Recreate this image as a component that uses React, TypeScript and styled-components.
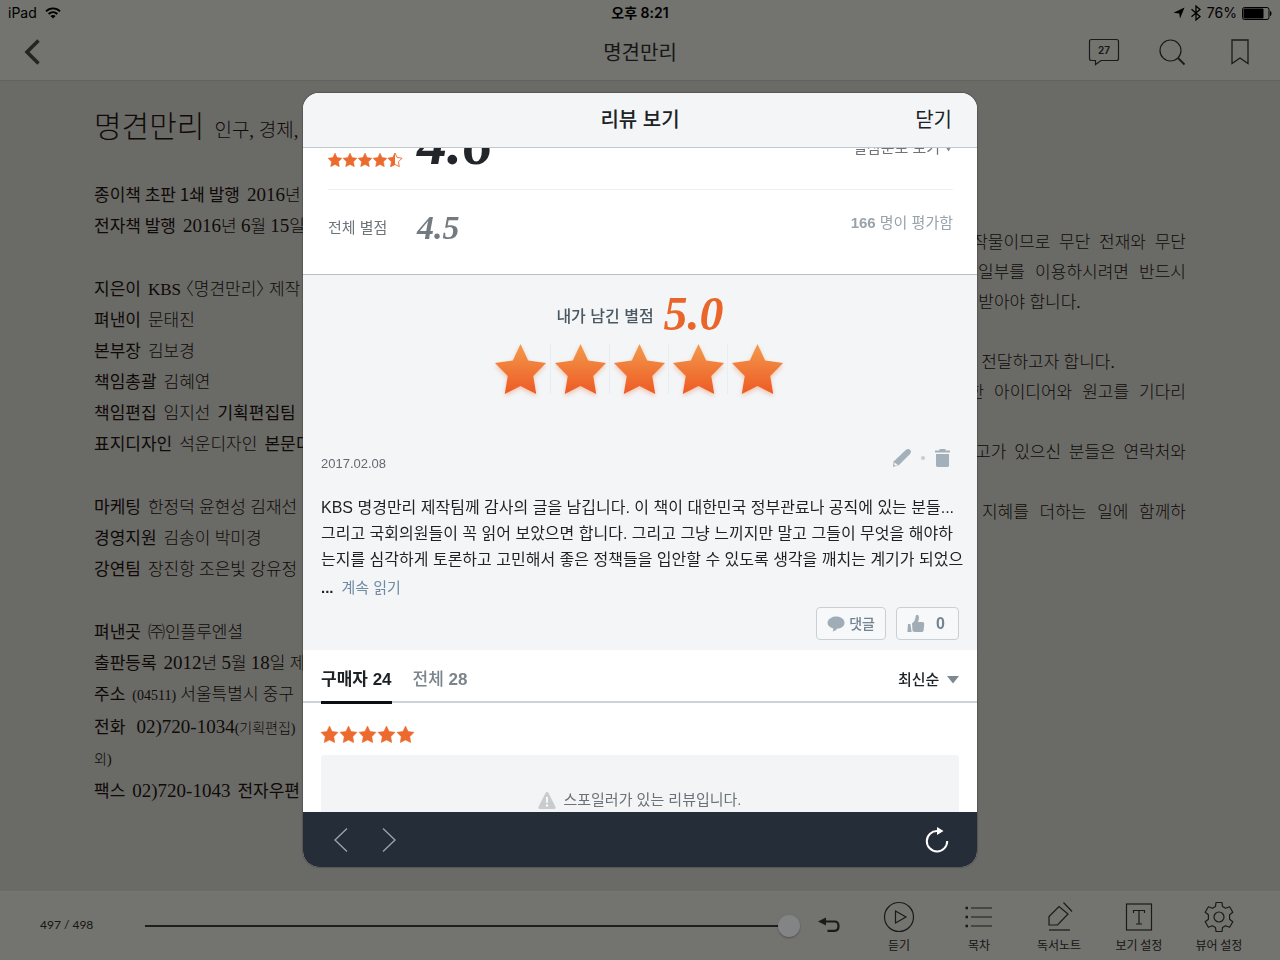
import React from "react";
import styled, { createGlobalStyle, css } from "styled-components";

const GlobalStyle = createGlobalStyle`
  *, *::before, *::after { box-sizing: border-box; }
  body { margin: 0; background: #cccbc6; }
  button, input, select { font: inherit; color: inherit; }
  h1, h2, p, dl, dt, dd { margin: 0; font-size: inherit; font-weight: inherit; }
`;

const sans = `"Liberation Sans", "Noto Sans CJK KR", sans-serif`;
const korean = `"Noto Sans CJK KR", sans-serif`;
const book = `"Liberation Serif", "Noto Sans CJK KR", serif`;

/* ---------- Reader ---------- */

const Reader = styled.div`
  display: flex;
  flex-direction: column;
  min-height: 100vh;
  color: #2c2c2c;
  font-family: ${korean};
`;

const TopBar = styled.header`
  background: #dddcd5;
  border-bottom: 1px solid #bdbcb6;
`;

const StatusBar = styled.div`
  display: grid;
  grid-template-columns: 1fr auto 1fr;
  align-items: center;
  height: 26px;
  padding: 0 8px;
  color: #000;
  font: 14px/20px Inter, "Noto Sans CJK KR", sans-serif;
`;

const StatusGroup = styled.div<{ $end?: boolean }>`
  display: flex;
  align-items: center;
  justify-content: ${(p) => (p.$end ? "flex-end" : "flex-start")};
  gap: ${(p) => (p.$end ? "5px" : "8px")};
`;

const Clock = styled.time`
  font-weight: 600;
`;

const NavBar = styled.div`
  display: grid;
  grid-template-columns: 1fr auto 1fr;
  align-items: center;
  height: 54px;
  padding: 0 24px 2px;
`;

const NavTitle = styled.h1`
  font-size: 20px;
  line-height: 28px;
`;

const NavActions = styled.div`
  display: flex;
  justify-content: flex-end;
  align-items: center;
  gap: 36px;
`;

const IconButton = styled.button`
  display: flex;
  justify-content: center;
  align-items: center;
  min-width: 32px;
  height: 32px;
  padding: 0;
  border: 0;
  background: none;
`;

const BackButton = styled(IconButton)`
  justify-content: flex-start;
  justify-self: start;
`;

const Pages = styled.main`
  display: grid;
  grid-template-columns: 1fr 1fr;
  gap: 108px;
  flex: 1;
  padding: 26px 94px 24px;
  color: #22150f;
  font-family: ${book};
  font-size: 17px;
  font-weight: 300;
`;

const LeftPage = styled.section`
  min-width: 0;
`;

const RightPage = styled.section`
  min-width: 0;
  padding-top: 121px;
  line-height: 30px;
`;

const BookTitle = styled.h2`
  display: flex;
  align-items: baseline;
  gap: 10px;
  height: 40px;
  margin-bottom: 31px;
  font-size: 30px;
  line-height: 40px;
`;

const BookSubtitle = styled.small`
  font-size: 19px;
`;

const CreditGroup = styled.dl`
  margin-bottom: 32px;
`;

const Credit = styled.div<{ $tall?: boolean }>`
  display: flex;
  align-items: baseline;
  gap: 7px;
  height: ${(p) => (p.$tall ? "33px" : "31px")};
  line-height: 31px;
  white-space: nowrap;
`;

const CreditLabel = styled.dt`
  color: #20130d;
  font-family: ${korean};
  font-weight: 400;
`;

const Note = styled.small`
  font-size: 14px;
`;

const Numeral = styled.span`
  font-size: 19px;
  line-height: 20px;
`;

const TitleInBrackets = styled.cite`
  font-style: normal;
  font-feature-settings: "halt";
`;

const Paragraph = styled.p`
  margin-bottom: 30px;
`;

const Line = styled.span<{ $full?: boolean }>`
  display: block;
  white-space: nowrap;
  ${(p) => p.$full && css`text-align-last: justify;`}
`;

const BottomBar = styled.footer`
  display: flex;
  align-items: center;
  height: 69px;
  padding: 0 21px 0 40px;
  background: #dddcd5;
  border-top: 1px solid #e4e3dd;
`;

const PageCount = styled.label`
  flex: 0 0 105px;
  padding-bottom: 2px;
  font: 12px/20px Lato, sans-serif;
`;

const Progress = styled.input`
  flex: 1;
  min-width: 0;
  height: 24px;
  margin: 0;
  appearance: none;
  background: linear-gradient(#3a3a3a, #3a3a3a) center / 100% 2px no-repeat;

  &::-webkit-slider-thumb {
    width: 22px;
    height: 22px;
    appearance: none;
    border-radius: 50%;
    background: #fcfdff;
    box-shadow: 0 1px 2px rgba(0, 0, 0, 0.3);
  }
`;

const UndoButton = styled(IconButton)`
  margin: 0 14px 0 13px;
  padding-bottom: 2px;
`;

const Tool = styled.button`
  display: flex;
  flex-direction: column;
  align-items: center;
  width: 80px;
  padding: 3px 0 0;
  border: 0;
  background: none;
  font-size: 12px;
  line-height: 18px;
  gap: 3px;
`;

/* ---------- Review dialog ---------- */

const Backdrop = styled.div`
  position: fixed;
  inset: 0;
  display: flex;
  align-items: center;
  justify-content: center;
  background: rgba(0, 0, 0, 0.48);
`;

const Dialog = styled.section`
  display: flex;
  flex-direction: column;
  width: 674px;
  max-width: calc(100vw - 32px);
  height: calc(100vh - 186px);
  overflow: hidden;
  border-radius: 16px;
  background: #fff;
  box-shadow: 0 0 1px 1px rgba(0, 0, 0, 0.2);
  color: #1d2226;
  font-family: ${sans};
  font-size: 15px;
  line-height: 20px;
`;

const DialogHeader = styled.header`
  display: grid;
  grid-template-columns: 1fr auto 1fr;
  align-items: center;
  flex: none;
  height: 55px;
  padding: 0 25px;
  border-bottom: 1px solid #c2c7ca;
  background: #f3f5f7;
  font-size: 20px;
  line-height: 28px;
`;

const DialogTitle = styled.h2`
  grid-column: 2;
  font-weight: 500;
`;

const CloseButton = styled.button`
  justify-self: end;
  padding: 0;
  border: 0;
  background: none;
`;

const DialogBody = styled.div`
  flex: 1;
  min-height: 0;
  overflow: hidden;
`;

const Summary = styled.div`
  padding: 0 24px 0 25px;
  border-bottom: 1px solid #b9c1c5;
`;

const ScoreRow = styled.div<{ $clipped?: boolean }>`
  display: flex;
  align-items: ${(p) => (p.$clipped ? "flex-end" : "center")};
  height: ${(p) => (p.$clipped ? "42px" : "84px")};
  overflow: hidden;
  ${(p) => p.$clipped && css`border-bottom: 1px solid #eef0f1;`}
`;

const ScoreLabel = styled.div<{ $clipped?: boolean }>`
  width: 89px;
  padding-bottom: ${(p) => (p.$clipped ? "22px" : "8px")};
  color: #6d757b;
`;

const Score = styled.strong<{ $size: number; $color: string }>`
  color: ${(p) => p.$color};
  font: italic 700 ${(p) => p.$size}px/1 "Liberation Serif", serif;
`;

const BigScore = styled(Score)`
  margin-bottom: 15px;
`;

const SmallScore = styled(Score)`
  margin-bottom: 8px;
`;

const RaterCount = styled.p`
  margin-left: auto;
  padding-bottom: 18px;
  color: #98a3ac;
`;

const SpreadButton = styled.button`
  display: flex;
  align-items: center;
  gap: 4px;
  margin: 0 0 31px auto;
  padding: 0;
  border: 0;
  background: none;
  color: #6d757b;
  line-height: 20px;
`;

const Stars = styled.div<{ $gap: number }>`
  display: flex;
  gap: ${(p) => p.$gap}px;
`;

const MyReview = styled.article`
  padding: 22px 18px 10px;
  background: #f3f5f7;
`;

const MyRating = styled.div`
  display: flex;
  align-items: center;
  justify-content: center;
  gap: 10px;
  height: 40px;
  color: #4b5862;
  font-size: 16px;
  font-weight: 500;
`;

const MyScore = styled(Score)`
  margin-bottom: 6px;
`;

const BigStars = styled.div`
  display: flex;
  justify-content: center;
  margin-top: 7px;
  padding-right: 3px;
`;

const BigStar = styled.span`
  display: flex;
  justify-content: center;
  width: 59px;
  & + & { border-left: 1px solid #eaedef; }
`;

const MetaRow = styled.div`
  display: flex;
  justify-content: space-between;
  height: 26px;
  margin-top: 54px;
`;

const ReviewDate = styled.time`
  align-self: flex-end;
  color: #626a70;
  font-size: 13px;
`;

const MetaActions = styled.div`
  display: flex;
  align-items: center;
  gap: 9px;
  height: 20px;
  padding-right: 8px;
`;

const MetaButton = styled.button`
  display: flex;
  padding: 0;
  border: 0;
  background: none;
`;

const Dot = styled.span`
  width: 4px;
  height: 4px;
  border-radius: 50%;
  background: #c6cdd2;
`;

const ReviewText = styled.p`
  margin-top: 21px;
  font-size: 16px;
  line-height: 26px;
`;

const More = styled.p`
  display: flex;
  gap: 8px;
  font-size: 15px;
  line-height: 30px;
`;

const MoreLink = styled.a`
  color: #6f8ba3;
  text-decoration: none;
`;

const ReviewActions = styled.div`
  display: flex;
  justify-content: flex-end;
  gap: 10px;
  margin-top: 4px;
`;

const PillButton = styled.button<{ $gap: number }>`
  display: flex;
  align-items: center;
  gap: ${(p) => p.$gap}px;
  height: 33px;
  padding: 0 10px;
  border: 1px solid #c9cfd4;
  border-radius: 4px;
  background: #f6f8f9;
  color: #748391;
  font-size: 14px;
  font-weight: 500;
`;

const Count = styled.span`
  min-width: 15px;
  font-size: 16px;
  font-weight: 700;
`;

const ListHeader = styled.div`
  display: flex;
  align-items: center;
  justify-content: space-between;
  height: 53px;
  padding: 0 18px;
  border-bottom: 2px solid #cdd2d6;
`;

const Tabs = styled.div`
  display: flex;
  align-self: stretch;
  gap: 21px;
`;

const Tab = styled.button<{ $active?: boolean }>`
  height: 54px;
  padding: 8px 0 0;
  border: 0;
  border-bottom: 3px solid ${(p) => (p.$active ? "#0c0f12" : "transparent")};
  background: none;
  color: ${(p) => (p.$active ? "#1d2226" : "#7a848d")};
  font-size: 17px;
  font-weight: ${(p) => (p.$active ? 700 : 500)};
`;

const SortField = styled.label`
  display: flex;
  align-items: center;
  gap: 7px;
  padding-top: 8px;
`;

const SortSelect = styled.select`
  padding: 0;
  border: 0;
  background: none;
  appearance: none;
  font-weight: 500;
  line-height: 20px;
`;

const ReviewItem = styled.article`
  padding: 23px 18px;
`;

const SpoilerBox = styled.div`
  display: flex;
  justify-content: center;
  gap: 7px;
  min-height: 140px;
  margin-top: 12px;
  padding-top: 35px;
  border-radius: 3px;
  background: #f3f4f5;
  color: #6b7277;
`;

const DialogFooter = styled.footer`
  display: flex;
  align-items: center;
  flex: none;
  gap: 16px;
  height: 55px;
  padding: 0 24px 0 22px;
  background: #252d39;
`;

const ReloadButton = styled(IconButton)`
  margin-left: auto;
`;

/* ---------- Icons ---------- */

const STAR =
  "M12 0 L15.6 7.7 L24 8.9 L18 15 L19.4 23.4 L12 19.6 L4.6 23.4 L6 15 L0 8.9 L8.4 7.7 Z";

const Star = ({ size, half }: { size: number; half?: boolean }) => (
  <svg width={size} height={size} viewBox="0 0 24 24" overflow="visible" aria-hidden="true">
    {half ? (
      <>
        <path d={STAR} fill="none" stroke="#ec6a2e" strokeWidth="1.6" />
        <path d="M12 0 V19.6 L4.6 23.4 L6 15 L0 8.9 L8.4 7.7 Z" fill="#ec6a2e" />
      </>
    ) : (
      <path d={STAR} fill="#ec6a2e" stroke="#ec6a2e" strokeWidth="0.8" />
    )}
  </svg>
);

const starShadow = { filter: "drop-shadow(0 1px 1px rgba(237,100,40,.35))" };

const GradientStar = ({ id }: { id: string }) => (
  <svg width="51" height="50" viewBox="0 0 24 23.4" preserveAspectRatio="none" overflow="visible" aria-hidden="true">
    <defs>
      <linearGradient id={id} x1="0" y1="0" x2="0" y2="1">
        <stop offset="0" stopColor="#f39a4b" />
        <stop offset="1" stopColor="#ed5a24" />
      </linearGradient>
    </defs>
    <path d={STAR} fill={`url(#${id})`} style={starShadow} />
  </svg>
);

const WifiIcon = () => (
  <svg width="16" height="12" viewBox="0 0 16 12" fill="none" stroke="#000" strokeWidth="1.9">
    <path d="M1 4.4 C5 0.4 11 0.4 15 4.4" />
    <path d="M3.6 7 C6.2 4.5 9.8 4.5 12.4 7" />
    <path d="M8 11.6 L5.4 8.9 C6.9 7.6 9.1 7.6 10.6 8.9 Z" fill="#000" stroke="none" />
  </svg>
);

const LocationIcon = () => (
  <svg width="12" height="12" viewBox="0 0 12 12">
    <path d="M11.500 0.500 L7 11.500 L6.300 6.600 L0.500 5.800 Z" />
  </svg>
);

const BluetoothIcon = () => (
  <svg width="12" height="16" viewBox="0 0 12 16" fill="none" stroke="#000" strokeWidth="1.3">
    <path d="M1.5 4.2 L10 11.6 L6 15 V1 L10 4.4 L1.5 11.8" />
  </svg>
);

const BatteryIcon = () => (
  <svg width="30" height="13" viewBox="0 0 30 13">
    <rect x="0.5" y="0.5" width="26.500" height="12" rx="2" fill="none" stroke="#000" />
    <rect x="1.5" y="1.5" width="20" height="10" rx="1" />
    <path d="M28 4 C30 4.6 30 8.4 28 9 Z" />
  </svg>
);

const BackIcon = () => (
  <svg width="18" height="26" viewBox="0 0 18 26" fill="none" stroke="#464646" strokeWidth="3.600">
    <path d="M14.500 1.5 L3 13 L14.500 24.5" />
  </svg>
);

const CommentsIcon = () => (
  <svg width="32" height="28" viewBox="0 0 32 28">
    <path
      d="M3.5 1.5 H28.5 Q30.5 1.5 30.5 3.5 V20.5 Q30.5 22.5 28.5 22.5 H13 L7.5 26.5 V22.5 H3.5 Q1.5 22.5 1.5 20.5 V3.5 Q1.5 1.5 3.5 1.5 Z"
      fill="none"
      stroke="#333"
      strokeWidth="1.2"
    />
    <text x="16" y="15.500" textAnchor="middle" fill="#2c2c2c" fontFamily="Inter, sans-serif" fontSize="10" fontWeight="600">
      27
    </text>
  </svg>
);

const SearchIcon = () => (
  <svg width="28" height="28" viewBox="0 0 28 28" fill="none" stroke="#333" strokeWidth="1.2">
    <circle cx="12.5" cy="12.5" r="10.5" />
    <path d="M20 20 L26.500 26.500" strokeWidth="1.8" />
  </svg>
);

const BookmarkIcon = () => (
  <svg width="18" height="26" viewBox="0 0 18 26" fill="none" stroke="#333" strokeWidth="1.3">
    <path d="M1 1 H17 V24.500 L9 19 L1 24.500 Z" />
  </svg>
);

const UndoIcon = () => (
  <svg width="24" height="18" viewBox="0 0 24 18">
    <path d="M1 5.500 L9 1.500 V9.500 Z" fill="#333" />
    <path d="M8 5.500 H17.500 Q21.500 5.500 21.500 10 Q21.500 14.800 17.500 14.800 H10.500" fill="none" stroke="#333" strokeWidth="2.200" />
  </svg>
);

const PencilIcon = () => (
  <svg width="20" height="20" viewBox="0 0 20 20" fill="#a3b0ba">
    <path d="M13.500 2.300 Q16 0 18 1.800 Q20 3.800 17.800 6.200 L7 17 L1 19 L1.600 13.600 Z" />
    <path d="M2.600 14.400 L6 17 L3.600 17.800 L2 16.600 Z" fill="#f3f5f7" />
  </svg>
);

const TrashIcon = () => (
  <svg width="17" height="20" viewBox="0 0 17 20" fill="#a3b0ba">
    <path d="M5.500 2.500 V1 H11.500 V2.500 H16 V4.600 H1 V2.500 Z" />
    <path d="M2 6 H15 V17.600 Q15 19 13.600 19 H3.400 Q2 19 2 17.600 Z" />
  </svg>
);

const BubbleIcon = () => (
  <svg width="18" height="16" viewBox="0 0 18 16">
    <path d="M9 0.500 C13.800 0.500 17.500 3.200 17.500 6.700 C17.500 10.200 13.800 12.600 10.400 12.600 Q9 15 5.600 15.600 Q6.600 14 6.200 12.400 C3 11.600 0.500 9.600 0.500 6.700 C0.500 3.200 4.200 0.500 9 0.500 Z" fill="#a0adb7" />
  </svg>
);

const ThumbIcon = () => (
  <svg width="18" height="19" viewBox="0 0 18 19" fill="#a0adb7">
    <path d="M1 10 H3.400 L4.600 18 H0.400 Z" />
    <path d="M5 9.600 Q8 7.400 8.400 4.200 Q8.400 1 10.200 0.800 Q12 1 12 3.600 Q12 5.600 11 8 H15.400 Q17.400 8.200 17.200 10 L16.600 16.400 Q16.200 18 14.600 18 H8 L5.600 17.200 Z" />
  </svg>
);

const Triangle = ({ width }: { width: number }) => (
  <svg width={width} height="8" viewBox="0 0 12 8" preserveAspectRatio="none">
    <path d="M0 0 H12 L6 7.500 Z" fill="#7e8892" />
  </svg>
);

const WarningIcon = () => (
  <svg width="18" height="20" viewBox="0 0 18 20">
    <path d="M9 2 Q10 2 10.600 3.200 L17.600 17 Q18 19 16.400 19 H1.600 Q0 19 0.400 17 L7.400 3.200 Q8 2 9 2 Z" fill="#c9cccf" />
    <path d="M8 7 H10 L9.700 13 H8.300 Z M8 14.500 H10 V16.500 H8 Z" fill="#fff" />
  </svg>
);

const Chevron = ({ forward }: { forward?: boolean }) => (
  <svg width="14" height="24" viewBox="0 0 14 24" fill="none" stroke="#9aa1ab" strokeWidth="1.400">
    <path d={forward ? "M1 0.500 L13 12 L1 23.500" : "M13 0.500 L1 12 L13 23.500"} />
  </svg>
);

const ReloadIcon = () => (
  <svg width="24" height="28" viewBox="0 0 24 28">
    <path d="M12.500 5 A10.200 10.200 0 1 0 22.200 15" fill="none" stroke="#fff" strokeWidth="2" />
    <path d="M12 1 L18.500 5 L12 9 Z" fill="#fff" />
  </svg>
);

const toolIcons: Record<string, React.ReactNode> = {
  듣기: (
    <>
      <circle cx="16" cy="16" r="14.500" />
      <path d="M12.500 10 L23 16 L12.500 22 Z" />
    </>
  ),
  목차: (
    <>
      <path d="M8 7 H29 M8 16 H29 M8 25 H29" />
      <path d="M2.500 7 H5 M2.500 16 H5 M2.500 25 H5" strokeWidth="2.400" />
    </>
  ),
  독서노트: (
    <>
      <path d="M6 29 H27" />
      <path d="M6 24 V15.500 L16 5.500 L25 13 L14.500 24 Z" />
      <path d="M20.500 1.500 L29 10.500" />
    </>
  ),
  "보기 설정": (
    <>
      <rect x="3.500" y="3" width="25" height="26" />
      <path d="M10.500 12 V9.500 H21.500 V12 M16 9.500 V23 M13 23 H19" />
    </>
  ),
  "뷰어 설정": (
    <>
      <circle cx="16" cy="16" r="5" />
      <path d="M13 1.500 H19 L19.500 5.500 L22.600 7.300 L26.600 5.800 L29.800 11.200 L26.600 13.800 V18.200 L29.800 20.800 L26.600 26.200 L22.600 24.700 L19.500 26.500 L19 30.500 H13 L12.500 26.500 L9.400 24.700 L5.400 26.200 L2.200 20.800 L5.400 18.200 V13.800 L2.200 11.200 L5.400 5.800 L9.400 7.300 L12.500 5.500 Z" strokeLinejoin="round" />
    </>
  ),
};

/* ---------- Data ---------- */

/* Book numerals are set a step larger than the Korean text around them. */
const withNumerals = (text: string) =>
  text.split(/([\d)-]+)/).map((part, i) => (i % 2 ? <Numeral key={i}>{part}</Numeral> : part));

type CreditRow = [label: string, value: React.ReactNode, more?: string];

const credits: CreditRow[][] = [
  [
    ["종이책 초판 1쇄 발행", withNumerals("2016년")],
    ["전자책 발행", withNumerals("2016년 6월 15일")],
  ],
  [
    ["지은이", <>KBS <TitleInBrackets>〈명견만리〉</TitleInBrackets> 제작</>],
    ["펴낸이", "문태진"],
    ["본부장", "김보경"],
    ["책임총괄", "김혜연"],
    ["책임편집", "임지선", "기획편집팀"],
    ["표지디자인", "석운디자인", "본문디"],
  ],
  [
    ["마케팅", "한정덕 윤현성 김재선"],
    ["경영지원", "김송이 박미경"],
    ["강연팀", "장진항 조은빛 강유정"],
  ],
];

/* ---------- App ---------- */

export default function App() {
  return (
    <>
      <GlobalStyle />
      <Reader>
        <TopBar>
          <StatusBar>
            <StatusGroup>
              <span>iPad</span>
              <WifiIcon />
            </StatusGroup>
            <Clock>오후 8:21</Clock>
            <StatusGroup $end>
              <LocationIcon />
              <BluetoothIcon />
              <span>76%</span>
              <BatteryIcon />
            </StatusGroup>
          </StatusBar>
          <NavBar>
            <BackButton aria-label="뒤로">
              <BackIcon />
            </BackButton>
            <NavTitle>명견만리</NavTitle>
            <NavActions>
              <IconButton aria-label="댓글 27개"><CommentsIcon /></IconButton>
              <IconButton aria-label="검색"><SearchIcon /></IconButton>
              <IconButton aria-label="책갈피"><BookmarkIcon /></IconButton>
            </NavActions>
          </NavBar>
        </TopBar>

        <Pages>
          <LeftPage>
            <BookTitle>
              명견만리 <BookSubtitle>인구, 경제,</BookSubtitle>
            </BookTitle>
            {credits.map((group, i) => (
              <CreditGroup key={i}>
                {group.map(([label, value, more]) => (
                  <Credit key={label}>
                    <CreditLabel>{label}</CreditLabel>
                    <dd>{value}</dd>
                    {more && <CreditLabel>{more}</CreditLabel>}
                  </Credit>
                ))}
              </CreditGroup>
            ))}
            <CreditGroup>
              <Credit>
                <CreditLabel>펴낸곳</CreditLabel>
                <dd>㈜인플루엔셜</dd>
              </Credit>
              <Credit>
                <CreditLabel>출판등록</CreditLabel>
                <dd>{withNumerals("2012년 5월 18일 제")}</dd>
              </Credit>
              <Credit $tall>
                <CreditLabel>주소</CreditLabel>
                <dd><Note>(04511)</Note> 서울특별시 중구</dd>
              </Credit>
              <Credit $tall>
                <CreditLabel>전화</CreditLabel>
                <dd>&nbsp;{withNumerals("02)720-1034")}<Note>(기획편집)</Note></dd>
              </Credit>
              <Credit>
                <dd><Note>외)</Note></dd>
              </Credit>
              <Credit>
                <CreditLabel>팩스</CreditLabel>
                <dd>{withNumerals("02)720-1043")}</dd>
                <CreditLabel>전자우편</CreditLabel>
              </Credit>
            </CreditGroup>
          </LeftPage>

          <RightPage>
            <Paragraph>
              <Line $full>이 책은 저작권법에 따라 보호받는 저작물이므로 무단 전재와 무단</Line>
              <Line $full>복제를 금지하며, 이 책의 전부 또는 일부를 이용하시려면 반드시</Line>
              <Line>저작권자와 ㈜인플루엔셜의 서면 동의를 받아야 합니다.</Line>
            </Paragraph>
            <Paragraph>
              <Line>인플루엔셜은 세상에 영향력 있는 지혜를 전달하고자 합니다.</Line>
              <Line $full>새로운 지식과 통찰을 담아내는 참신한 아이디어와 원고를 기다리</Line>
            </Paragraph>
            <Paragraph>
              <Line $full>출간을 희망하는 새로운 기획안이나 원고가 있으신 분들은 연락처와</Line>
            </Paragraph>
            <Paragraph>
              <Line $full>세상에 영향력 있는 새로운 이야기와 지혜를 더하는 일에 함께하</Line>
            </Paragraph>
          </RightPage>
        </Pages>

        <BottomBar>
          <PageCount htmlFor="progress">497 / 498</PageCount>
          <Progress id="progress" type="range" min={1} max={498} defaultValue={498} />
          <UndoButton aria-label="되돌리기"><UndoIcon /></UndoButton>
          {Object.entries(toolIcons).map(([label, icon]) => (
            <Tool key={label}>
              <svg width="32" height="32" viewBox="0 0 32 32" fill="none" stroke="#333" strokeWidth="1.200">
                {icon}
              </svg>
              {label}
            </Tool>
          ))}
        </BottomBar>
      </Reader>

      <Backdrop>
        <Dialog role="dialog" aria-modal="true" aria-labelledby="dialog-title">
          <DialogHeader>
            <DialogTitle id="dialog-title">리뷰 보기</DialogTitle>
            <CloseButton>닫기</CloseButton>
          </DialogHeader>

          <DialogBody>
            <Summary>
              <ScoreRow $clipped>
                <ScoreLabel $clipped>
                  <Stars $gap={1}>
                    {[0, 1, 2, 3].map((n) => <Star key={n} size={14} />)}
                    <Star size={14} half />
                  </Stars>
                </ScoreLabel>
                <BigScore $size={60} $color="#22262a">4.6</BigScore>
                <SpreadButton>
                  별점분포 보기 <Triangle width={9} />
                </SpreadButton>
              </ScoreRow>
              <ScoreRow>
                <ScoreLabel>전체 별점</ScoreLabel>
                <SmallScore $size={34} $color="#737b81">4.5</SmallScore>
                <RaterCount><b>166</b> 명이 평가함</RaterCount>
              </ScoreRow>
            </Summary>

            <MyReview>
              <MyRating>
                내가 남긴 별점
                <MyScore $size={48} $color="#ea6529">5.0</MyScore>
              </MyRating>
              <BigStars>
                {[1, 2, 3, 4, 5].map((n) => (
                  <BigStar key={n}><GradientStar id={`star-${n}`} /></BigStar>
                ))}
              </BigStars>
              <MetaRow>
                <ReviewDate dateTime="2017-02-08">2017.02.08</ReviewDate>
                <MetaActions>
                  <MetaButton aria-label="수정"><PencilIcon /></MetaButton>
                  <Dot />
                  <MetaButton aria-label="삭제"><TrashIcon /></MetaButton>
                </MetaActions>
              </MetaRow>
              <ReviewText>
                <Line>KBS 명경만리 제작팀께 감사의 글을 남깁니다. 이 책이 대한민국 정부관료나 공직에 있는 분들...</Line>
                <Line>그리고 국회의원들이 꼭 읽어 보았으면 합니다. 그리고 그냥 느끼지만 말고 그들이 무엇을 해야하</Line>
                <Line>는지를 심각하게 토론하고 고민해서 좋은 정책들을 입안할 수 있도록 생각을 깨치는 계기가 되었으</Line>
              </ReviewText>
              <More>
                <b>...</b> <MoreLink href="#more">계속 읽기</MoreLink>
              </More>
              <ReviewActions>
                <PillButton $gap={4}><BubbleIcon />댓글</PillButton>
                <PillButton $gap={8}><ThumbIcon /><Count>0</Count></PillButton>
              </ReviewActions>
            </MyReview>

            <ListHeader>
              <Tabs role="tablist">
                <Tab role="tab" aria-selected="true" $active>구매자 24</Tab>
                <Tab role="tab" aria-selected="false">전체 <b>28</b></Tab>
              </Tabs>
              <SortField>
                <SortSelect aria-label="정렬">
                  <option>최신순</option>
                </SortSelect>
                <Triangle width={12} />
              </SortField>
            </ListHeader>

            <ReviewItem>
              <Stars $gap={2}>
                {[0, 1, 2, 3, 4].map((n) => <Star key={n} size={17} />)}
              </Stars>
              <SpoilerBox>
                <WarningIcon />
                <p>스포일러가 있는 리뷰입니다.</p>
              </SpoilerBox>
            </ReviewItem>
          </DialogBody>

          <DialogFooter>
            <IconButton aria-label="이전"><Chevron /></IconButton>
            <IconButton aria-label="다음"><Chevron forward /></IconButton>
            <ReloadButton aria-label="새로고침"><ReloadIcon /></ReloadButton>
          </DialogFooter>
        </Dialog>
      </Backdrop>
    </>
  );
}
